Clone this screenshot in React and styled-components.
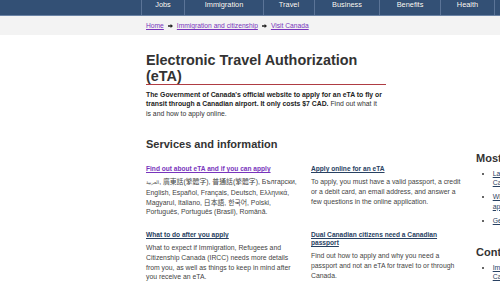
import React from 'react';
import styled, {createGlobalStyle} from 'styled-components';

const GlobalStyle = createGlobalStyle`
  html, body{
    margin: 0;
    padding: 0;
    overflow: hidden;
    background: #fff;
    color: #333;
    font-family: "Liberation Sans", Arial, "DejaVu Sans", "Noto Sans CJK TC", sans-serif;
  }
`;

const menu = [
  {label: 'Jobs', width: 43},
  {label: 'Immigration', width: 79},
  {label: 'Travel', width: 51},
  {label: 'Business', width: 65},
  {label: 'Benefits', width: 61},
  {label: 'Health', width: 55},
];

const Languages = () => (
  <>
    <Arabic lang="ar">العربية</Arabic>, 廣東話(繁體字), 普通話(繁體字), Български, English, Español, Français, Deutsch, Ελληνικά, Magyarul, Italiano, 日本語, 한국어, Polski, Português, Português (Brasil), Română.
  </>
);

const services = [
  {
    title: 'Find out about eTA and if you can apply',
    visited: true,
    text: <Languages />,
  },
  {
    title: 'Apply online for an eTA',
    text: 'To apply, you must have a valid passport, a credit or a debit card, an email address, and answer a few questions in the online application.',
  },
  {
    title: 'What to do after you apply',
    text: 'What to expect if Immigration, Refugees and Citizenship Canada (IRCC) needs more details from you, as well as things to keep in mind after you receive an eTA.',
  },
  {
    title: 'Dual Canadian citizens need a Canadian passport',
    text: 'Find out how to apply and why you need a passport and not an eTA for travel to or through Canada.',
  },
];

const Arrow = () => (
  <svg width="5" height="4" viewBox="0 0 5 4">
    <path d="M0 1.3h2.6V0L5 2 2.6 4V2.7H0z" fill="#222" />
  </svg>
);

const App = () => {
  return (
    <>
      <GlobalStyle />
      <TopNav>
        <NavList>
          {menu.map((m) => (
            <NavItem key={m.label} $width={m.width}>{m.label}</NavItem>
          ))}
        </NavList>
      </TopNav>

      <Breadcrumbs>
        <Crumb href="#">Home</Crumb>
        <Arrow />
        <Crumb href="#">Immigration and citizenship</Crumb>
        <Arrow />
        <Crumb href="#">Visit Canada</Crumb>
      </Breadcrumbs>

      <Main>
        <Title>Electronic Travel Authorization (eTA)</Title>
        <Intro>
          <strong>The Government of Canada's official website to apply for an eTA to fly or transit through a Canadian airport. It only costs $7 CAD.</strong> Find out what it is and how to apply online.
        </Intro>

        <Columns>
          <div>
            <SectionTitle>Services and information</SectionTitle>
            <ServiceGrid>
              {services.map((s) => (
                <Service key={s.title}>
                  <ServiceLink href="#" $visited={s.visited}>{s.title}</ServiceLink>
                  <ServiceText>{s.text}</ServiceText>
                </Service>
              ))}
            </ServiceGrid>
          </div>

          <Aside>
            <SectionTitle>Most requested</SectionTitle>
            <SideList>
              <li><SideLink href="#">Language requirements for<br />Canada travel</SideLink></li>
              <li><SideLink href="#">What happens after you<br />apply</SideLink></li>
              <li><SideLink href="#">Get help with your eTA</SideLink></li>
            </SideList>
            <SectionTitle $gap>Contact us</SectionTitle>
            <SideList>
              <li><SideLink href="#">Immigration, Refugees and Citizenship<br />Canada</SideLink></li>
            </SideList>
          </Aside>
        </Columns>
      </Main>
    </>
  )
}

const TopNav = styled.nav`
  height: 15px;
  background: #335075;
  border-bottom: 1px solid #6a83a5;
`;

const NavList = styled.ul`
  display: flex;
  margin: 0 0 0 141px;
  padding: 0;
  list-style: none;
  height: 15px;
`;

const NavItem = styled.li`
  width: ${(p) => p.$width}px;
  box-sizing: border-box;
  border-left: 1px solid #5b7497;
  color: #fff;
  font-size: 7.4px;
  line-height: 9px;
  text-align: center;
  text-shadow: 0 0 1px rgba(0,0,0,0.4);

  &:last-child{
    border-right: 1px solid #5b7497;
  }
`;

const Breadcrumbs = styled.div`
  display: flex;
  align-items: center;
  gap: 4px;
  height: 19px;
  padding-left: 146px;
  background: #f3f3f3;
  font-size: 6.7px;
`;

const Crumb = styled.a`
  color: #7834bc;
  text-decoration: underline;
`;

const Main = styled.main`
  padding: 17px 0 0 146px;
`;

const Title = styled.h1`
  width: 240px;
  margin: 0;
  font-size: 14.4px;
  line-height: 16px;
  font-weight: 700;
  color: #333;
  border-bottom: 1px solid #af3c43;
`;

const Intro = styled.p`
  width: 237px;
  margin: 4.7px 0 0;
  font-size: 6.85px;
  line-height: 9.6px;
  color: #333;

  strong{
    color: #222;
  }
`;

const Columns = styled.div`
  display: flex;
  align-items: flex-start;
  gap: 10px;
  margin-top: 20px;
`;

const SectionTitle = styled.h2`
  margin: ${(p) => (p.$gap ? '20.3px' : '0')} 0 0;
  font-size: 11px;
  line-height: 13px;
  font-weight: 700;
  color: #333;
  white-space: nowrap;
`;

const ServiceGrid = styled.div`
  display: grid;
  grid-template-columns: 155px 155px;
  column-gap: 10px;
  row-gap: 14.4px;
  margin-top: 13.8px;
`;

const Service = styled.div`
  display: flex;
  flex-direction: column;
  gap: 4.2px;
`;

const ServiceLink = styled.a`
  font-size: 6.6px;
  line-height: 8px;
  font-weight: 700;
  color: ${(p) => (p.$visited ? '#7834bc' : '#284162')};
  text-decoration: underline;
`;

const ServiceText = styled.p`
  margin: 0;
  font-size: 6.85px;
  line-height: 9.6px;
  color: #444;
`;

const Arabic = styled.span`
  font-size: 4.8px;
`;

const Aside = styled.aside`
  padding-top: 13.3px;
  width: 170px;
  flex-shrink: 0;
`;

const SideList = styled.ul`
  margin: 3.8px 0 0;
  padding-left: 16.7px;
  list-style: disc;
  font-size: 6.85px;
  line-height: 9.4px;

  li + li{
    margin-top: 5px;
  }
`;

const SideLink = styled.a`
  color: #284162;
  text-decoration: underline;
`;

export default App
